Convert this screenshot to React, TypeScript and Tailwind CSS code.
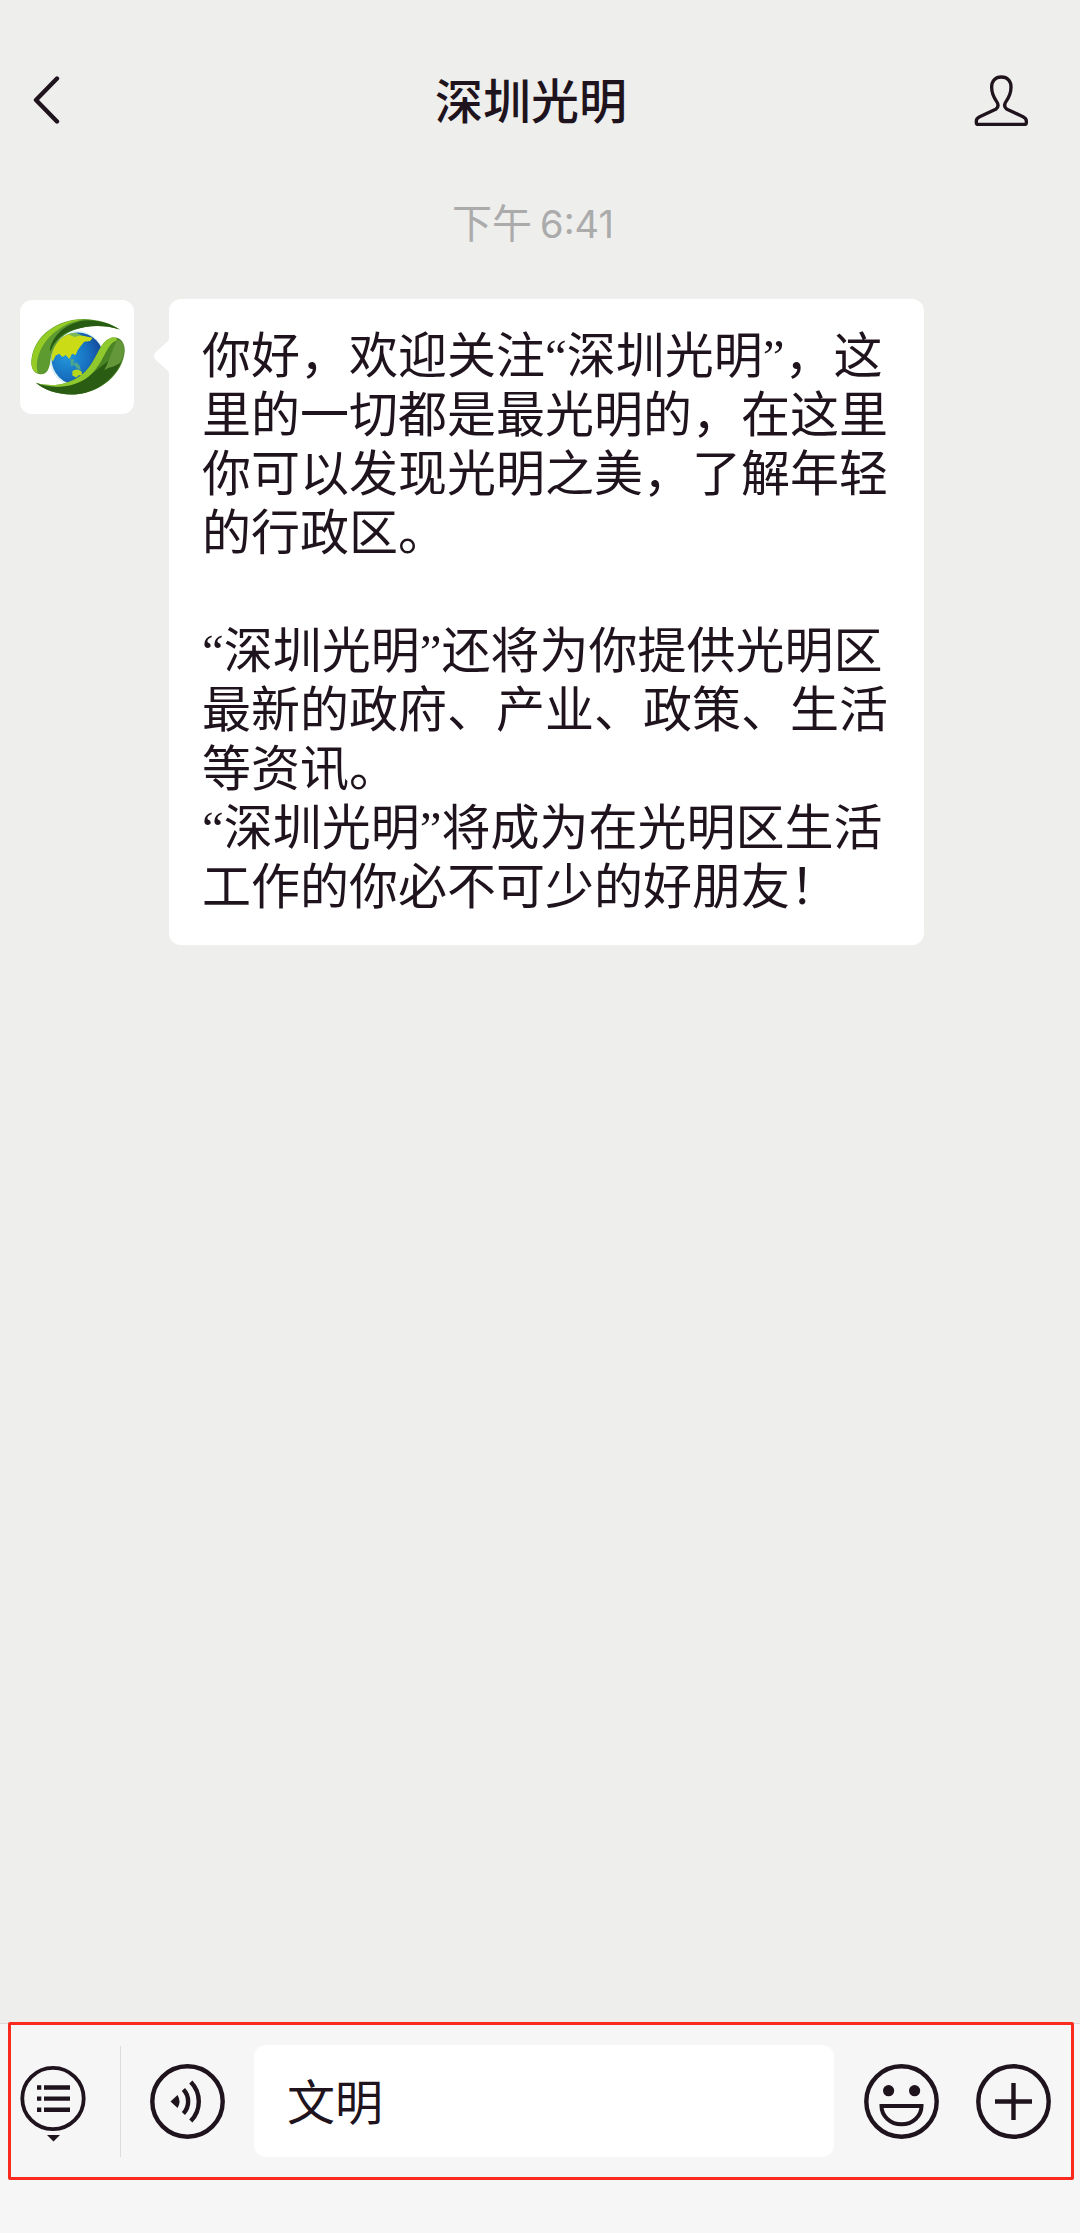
import React, { useState } from "react";

function BackIcon() {
  return (
    <svg viewBox="0 0 28 50" className="h-[50px] w-7" fill="none" stroke="currentColor" strokeWidth="4.4" strokeLinecap="round" strokeLinejoin="round" aria-hidden="true">
      <path d="M24 3.5 3 25 24 46.5" />
    </svg>
  );
}

function ProfileIcon() {
  return (
    <svg viewBox="105 70 165 159" className="h-[53px] w-[55px]" fill="none" stroke="currentColor" strokeWidth="10" strokeLinejoin="round" aria-hidden="true">
      <path d="M187 79C168 79 158 92 158 110C158 130 166 143 173 153C180 163 178 170 170 176L122 198Q112 203 112 211V216Q112 221 118 221H256Q262 221 262 216V211Q262 203 252 198L204 176C196 170 194 163 201 153C208 143 216 130 216 110C216 92 206 79 187 79Z" />
    </svg>
  );
}

function GlobeLogo() {
  return (
    <svg viewBox="58 60 344 344" className="h-full w-full" role="img" aria-label="深圳光明">
      <defs>
        <radialGradient id="sea" cx="0.3" cy="0.45" r="0.75">
          <stop offset="0" stopColor="#2398dc" />
          <stop offset="0.55" stopColor="#1770c0" />
          <stop offset="1" stopColor="#153a8c" />
        </radialGradient>
        <clipPath id="globe">
          <circle cx="232" cy="237" r="79" />
        </clipPath>
      </defs>
      <circle cx="230" cy="237" r="84" fill="#dcf2f6" />
      <circle cx="232" cy="237" r="79" fill="url(#sea)" />
      <g clipPath="url(#globe)">
        <path d="M150 215L166 180L205 155L240 166L277 174L270 184L252 186L240 200L232 212L226 226L215 222L207 238L196 226L186 232L176 222L165 228L158 244L148 240Z" fill="#cbdc16" />
        <path d="M196 160L224 157L244 166L222 172Z" fill="#79b75a" />
        <path d="M210 236L222 240L218 252L228 248L238 258L242 272L230 266L222 256L212 260Z" fill="#4fa68e" />
        <path d="M216 274Q230 264 244 276L246 290L236 286L228 294L216 288Z" fill="#b8d61c" />
      </g>
      <path d="M122 284C98 286 89 262 93 236C103 166 170 118 250 117C293 118 332 130 359 149C310 133 262 136 222 150C175 167 155 205 150 240C148 265 140 284 122 284Z" fill="#5d9a2f" />
      <path d="M112 281C94 276 90 255 94 236C105 166 172 120 250 118C190 128 140 165 118 216C106 244 108 264 112 281Z" fill="#95cb25" />
      <path d="M148 208C160 160 205 124 262 121C300 121 332 132 359 149C310 133 262 136 222 150C185 160 162 184 150 215Z" fill="#285c12" />
      <path d="M106 310C150 324 210 318 254 277C292 240 296 186 334 174C360 168 375 188 374 213C370 280 302 345 214 345C168 345 130 331 106 310Z" fill="#4a8424" />
      <path d="M106 310C150 330 220 326 266 290C306 260 330 236 352 230C368 224 368 240 356 262C326 314 272 345 214 345C168 345 130 331 106 310Z" fill="#2a5c14" />
      <path d="M106 310C150 324 210 318 254 277C292 240 296 186 334 174C346 172 352 176 350 182C318 190 312 252 266 290C226 324 160 330 106 310Z" fill="#8fc92d" />
      <path d="M352 180C378 184 376 226 360 250C344 262 326 262 312 272C330 240 336 206 352 180Z" fill="#64963a" />
    </svg>
  );
}

function MenuIcon() {
  return (
    <svg viewBox="0 0 66 86" className="h-[86px] w-[66px]" fill="none" stroke="currentColor" aria-hidden="true">
      <circle cx="33" cy="40.5" r="30.7" strokeWidth="3.8" />
      <path d="M17 29.5h4.3M17 40.6h4.3M17 51.7h4.3M24 29.5h26M24 40.6h26M24 51.7h26" strokeWidth="4.4" />
      <path d="M27 77h13l-6.5 6.5z" fill="currentColor" stroke="none" />
    </svg>
  );
}

function RoundIcon({ children }: { children: React.ReactNode }) {
  return (
    <svg viewBox="0 0 75 75" className="size-[75px]" fill="none" stroke="currentColor" strokeWidth="4.4" aria-hidden="true">
      <circle cx="37.5" cy="37.5" r="35.2" />
      {children}
    </svg>
  );
}

const paragraphs = [
  "你好，欢迎关注“深圳光明”，这里的一切都是最光明的，在这里你可以发现光明之美，了解年轻的行政区。",
  "",
  "“深圳光明”还将为你提供光明区最新的政府、产业、政策、生活等资讯。",
  "“深圳光明”将成为在光明区生活工作的你必不可少的好朋友！",
];

export default function App() {
  const [draft, setDraft] = useState("文明");

  return (
    <div lang="zh-CN" className="flex min-h-screen flex-col bg-[#eeeeec] font-[Inter,'Noto_Sans_CJK_SC',sans-serif] text-[#1f141d]">
      <header className="flex items-start justify-between pt-[60px] pr-[51px] pl-[33px]">
        <button type="button" aria-label="返回" className="flex h-20 w-[55px] items-center">
          <BackIcon />
        </button>
        <h1 className="pt-0.5 text-[48px] leading-[80px] font-medium">深圳光明</h1>
        <button type="button" aria-label="公众号资料" className="flex h-20 items-center">
          <ProfileIcon />
        </button>
      </header>

      <main className="flex-1 pt-[52px]">
        <p className="flex items-baseline justify-center gap-2 pr-3.5 text-[40px] leading-[60px] text-[#ababab]">
          <span>下午</span>
          <span className="text-[38px]">6:41</span>
        </p>
        <article className="mt-[45px] mr-[156px] ml-5 flex items-start">
          <div className="mt-px size-[114px] shrink-0 overflow-hidden rounded-xl bg-white">
            <GlobeLogo />
          </div>
          <div className="relative ml-[35px] min-w-0 flex-1 rounded-xl bg-white px-[33px] py-7 font-['Liberation_Serif','Noto_Sans_CJK_SC',sans-serif] text-[49px] leading-[59px]">
            <svg viewBox="0 0 16 34" className="absolute top-10 -left-[15px] h-[34px] w-4 text-white" fill="currentColor" aria-hidden="true">
              <path d="M16 0 2 13Q-2 17 2 21L16 34Z" />
            </svg>
            {paragraphs.map((text, i) => (
              <p key={i} className="min-h-[59px]">
                {text}
              </p>
            ))}
          </div>
        </article>
      </main>

      <footer className="border-t border-[#dcdcdc] bg-[#f6f6f6] pb-[53px]">
        <form onSubmit={(e) => e.preventDefault()} className="-mt-0.5 mr-1.5 ml-2 flex items-center rounded-xs border-3 border-[#fb2a1e] py-5 pr-5 pl-[9px]">
          <button type="button" aria-label="菜单" className="shrink-0">
            <MenuIcon />
          </button>
          <div className="ml-[34px] h-[111px] w-px bg-[#dcdcdc]" />
          <button type="button" aria-label="语音" className="ml-[29px] shrink-0">
            <RoundIcon>
              <path d="M20.5 37.5 27.5 31Q31.5 37.5 27.5 44Z" fill="currentColor" stroke="none" />
              <path d="M33.4 25.6A17.3 17.3 0 0 1 33.4 49.4M40.8 18A27.8 27.8 0 0 1 40.8 57" />
            </RoundIcon>
          </button>
          <input
            type="text"
            aria-label="输入消息"
            value={draft}
            onChange={(e) => setDraft(e.target.value)}
            className="ml-[29px] h-28 min-w-0 flex-1 rounded-xl bg-white px-[33px] pb-1 text-[48px] outline-none"
          />
          <button type="button" aria-label="表情" className="ml-[30px] shrink-0">
            <RoundIcon>
              <circle cx="24.6" cy="26.7" r="5.6" fill="currentColor" stroke="none" />
              <circle cx="50.6" cy="26.7" r="5.6" fill="currentColor" stroke="none" />
              <path d="M17.5 42H57.5A20 18.3 0 0 1 17.5 42Z" strokeWidth="4" />
            </RoundIcon>
          </button>
          <button type="button" aria-label="更多" className="ml-[37px] shrink-0">
            <RoundIcon>
              <path d="M37.5 19V56M19 37.5H56" />
            </RoundIcon>
          </button>
        </form>
      </footer>
    </div>
  );
}
